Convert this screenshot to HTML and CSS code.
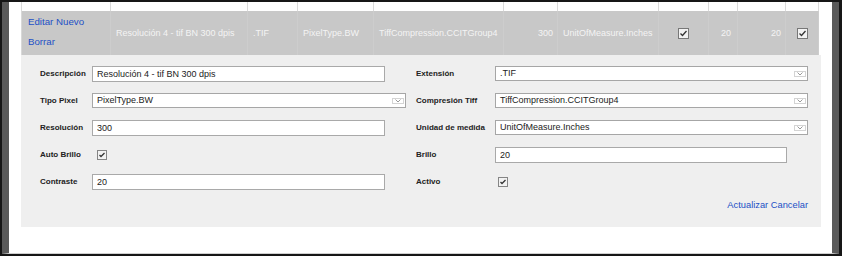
FILE: index.html
```html
<!DOCTYPE html>
<html>
<head>
	<meta charset="UTF-8">
	<title>Resoluciones</title>
	<link rel="stylesheet" href="styles.css">
</head>
<body>
	<div class="frame">
		<div class="page">
			<div class="grid">
				<div class="head">
					<div></div><div></div><div></div><div></div><div></div><div></div>
					<div></div><div></div><div></div><div></div><div></div>
				</div>
				<div class="row">
					<div class="cell links">
						<a href="#">Editar</a> <a href="#">Nuevo</a><br>
						<a href="#">Borrar</a>
					</div>
					<div class="cell">Resolución 4 - tif BN 300 dpis</div>
					<div class="cell">.TIF</div>
					<div class="cell">PixelType.BW</div>
					<div class="cell">TiffCompression.CCITGroup4</div>
					<div class="cell num">300</div>
					<div class="cell">UnitOfMeasure.Inches</div>
					<div class="cell mid">
						<span class="check"><svg width="9" height="9" viewBox="0 0 9 9"><polyline points="1.5,4.5 3.5,6.5 7.5,2" /></svg></span>
					</div>
					<div class="cell num n1">20</div>
					<div class="cell num">20</div>
					<div class="cell mid">
						<span class="check"><svg width="9" height="9" viewBox="0 0 9 9"><polyline points="1.5,4.5 3.5,6.5 7.5,2" /></svg></span>
					</div>
				</div>

				<!-- fila en edicion -->
				<div class="edit">
					<div class="form">
						<label>Descripción</label>
						<div><input class="txt" type="text" value="Resolución 4 - tif BN 300 dpis"></div>
						<label>Extensión</label>
						<div class="select"><span>.TIF</span><b class="arrow"><svg width="6" height="4" viewBox="0 0 6 4"><polyline points="0.5,0.5 3,3 5.5,0.5" /></svg></b></div>

						<label>Tipo Pixel</label>
						<div class="select wide"><span>PixelType.BW</span><b class="arrow"><svg width="6" height="4" viewBox="0 0 6 4"><polyline points="0.5,0.5 3,3 5.5,0.5" /></svg></b></div>
						<label>Compresión Tiff</label>
						<div class="select"><span>TiffCompression.CCITGroup4</span><b class="arrow"><svg width="6" height="4" viewBox="0 0 6 4"><polyline points="0.5,0.5 3,3 5.5,0.5" /></svg></b></div>

						<label>Resolución</label>
						<div><input class="txt" type="text" value="300"></div>
						<label>Unidad de medida</label>
						<div class="select"><span>UnitOfMeasure.Inches</span><b class="arrow"><svg width="6" height="4" viewBox="0 0 6 4"><polyline points="0.5,0.5 3,3 5.5,0.5" /></svg></b></div>

						<label>Auto Brillo</label>
						<div><span class="check small auto"><svg width="8" height="8" viewBox="0 0 8 8"><polyline points="1.5,4 3,5.5 6.5,2" /></svg></span></div>
						<label>Brillo</label>
						<div><input class="txt short" type="text" value="20"></div>

						<label>Contraste</label>
						<div><input class="txt" type="text" value="20"></div>
						<label>Activo</label>
						<div><span class="check small"><svg width="8" height="8" viewBox="0 0 8 8"><polyline points="1.5,4 3,5.5 6.5,2" /></svg></span></div>
					</div>
					<div class="actions"><a href="#">Actualizar</a> <a href="#">Cancelar</a></div>
				</div>
			</div>
		</div>
	</div>
</body>
</html>
```

FILE: styles.css
```css
*{
	margin:0;
	padding:0;
	box-sizing:border-box;
}
body{
	font-family:"Liberation Sans", Arial, sans-serif;
	background:#fff;
}
a{
	color:#2250c6;
	text-decoration:none;
}
.frame{
	width:842px;
	height:256px;
	border:2px solid #161616;
	border-right-width:3px;
}
.page{
	height:100%;
	border-left:7px solid #5a5a5a;
	border-right:7px solid #5a5a5a;
	border-bottom:1px solid #cfcfcf;
	padding-left:12px;
	background:#fff;
}
.head,.row{
	display:grid;
	grid-template-columns:89px 137px 50px 76px 130px 54px 101px 50px 29px 48px 33px;
	width:798px;
}
.head{
	height:9px;
	border-left:1px solid #dadada;
}
.head>div{
	border-right:1px solid #dadada;
}
.row{
	height:44px;
	background:#c8c8c8;
	border-left:1px solid #d8d8d8;
	color:#f4f4f4;
	font-size:9px;
}
.cell{
	display:flex;
	align-items:center;
	padding-left:5px;
	border-right:1px solid #cdcdcd;
	white-space:nowrap;
}
.cell.links{
	display:block;
	padding:1px 0 0 6px;
	font-size:9.7px;
	line-height:20px;
}
.cell.num{
	justify-content:flex-end;
	padding:0 4px 0 0;
}
.cell.n1{
	padding-right:6px;
}
.cell.mid{
	justify-content:center;
	padding:0;
}
.check{
	display:inline-flex;
	align-items:center;
	justify-content:center;
	width:11px;
	height:11px;
	border:1px solid #777;
	background:#f2f2f2;
}
.check polyline{
	fill:none;
	stroke:#333;
	stroke-width:1.3;
}
.check.small{
	width:10px;
	height:10px;
	border-color:#858585;
	margin-left:3px;
	vertical-align:middle;
}
.check.auto{
	margin-left:5px;
}
.edit{
	width:800px;
	height:172px;
	background:#efefef;
	padding:5px 13px 0 19px;
}
.form{
	display:grid;
	grid-template-columns:52px 324px 79px 313px;
	grid-auto-rows:27px;
	align-items:center;
}
.form label{
	font-size:8px;
	font-weight:bold;
	color:#222;
}
.form>div{
	display:flex;
	align-items:center;
}
.txt{
	width:293px;
	height:16px;
	border:1px solid #a9a9a9;
	background:#fff;
	font-family:"Liberation Sans", Arial, sans-serif;
	font-size:9px;
	color:#222;
	padding:0 4px;
	outline:none;
}
.txt.short{
	width:292px;
}
.form .select{
	display:flex;
	width:313px;
	height:15px;
	border:1px solid #a6a6a6;
	background:#fff;
	font-size:9px;
	color:#222;
}
.form .select.wide{
	width:314px;
}
.select span{
	flex:1;
	padding-left:4px;
	line-height:13px;
}
.select .arrow{
	display:flex;
	align-items:center;
	justify-content:center;
	width:12px;
	margin:1px;
	border:1px solid #d4d4d4;
}
.arrow polyline{
	fill:none;
	stroke:#9a9a9a;
	stroke-width:1;
}
.actions{
	margin-top:4px;
	text-align:right;
	font-size:9.3px;
	line-height:12px;
}
```
